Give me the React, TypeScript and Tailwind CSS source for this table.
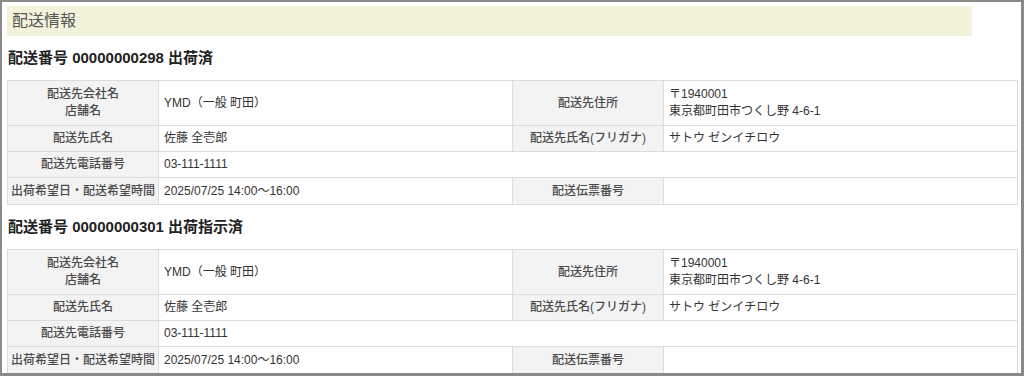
import React from "react";

const font = { fontFamily: '"Liberation Sans", "Noto Sans CJK JP", sans-serif' };

function Th({ children }: { children: React.ReactNode }) {
  return (
    <th className="w-[151px] whitespace-nowrap border border-[#dcdcdc] bg-[#f3f3f3] px-0 py-[4px] text-center align-middle text-[12px] font-medium leading-[17px] text-[#4a4a4a]">
      {children}
    </th>
  );
}

function Td({ children, colSpan }: { children?: React.ReactNode; colSpan?: number }) {
  return (
    <td
      colSpan={colSpan}
      className="border border-[#dcdcdc] bg-white px-[5px] py-[4px] text-left align-middle text-[12px] leading-[17px] text-[#333]"
    >
      {children}
    </td>
  );
}

function Shipment({ no, status }: { no: string; status: string }) {
  return (
    <div>
      <div className="flex h-[44px] items-center pl-[6px] text-[15px] font-bold text-[#222]">
        配送番号 {no} {status}
      </div>
      <table className="ml-[5px] w-[1010px] table-fixed border-collapse">
        <colgroup>
          <col className="w-[151px]" />
          <col className="w-[354px]" />
          <col className="w-[151px]" />
          <col className="w-[354px]" />
        </colgroup>
        <tbody>
          <tr className="h-[45px]">
            <Th>
              配送先会社名
              <br />
              店舗名
            </Th>
            <Td>YMD（一般 町田）</Td>
            <Th>配送先住所</Th>
            <Td>
              〒1940001
              <br />
              東京都町田市つくし野 4-6-1
            </Td>
          </tr>
          <tr>
            <Th>配送先氏名</Th>
            <Td>佐藤 全壱郎</Td>
            <Th>配送先氏名(フリガナ)</Th>
            <Td>サトウ ゼンイチロウ</Td>
          </tr>
          <tr>
            <Th>配送先電話番号</Th>
            <Td colSpan={3}>03-111-1111</Td>
          </tr>
          <tr className="h-[27px]">
            <Th>出荷希望日・配送希望時間</Th>
            <Td>2025/07/25 14:00〜16:00</Td>
            <Th>配送伝票番号</Th>
            <Td></Td>
          </tr>
        </tbody>
      </table>
    </div>
  );
}

export default function App() {
  return (
    <div
      style={font}
      className="h-[376px] w-[1024px] overflow-hidden border-t-[2px] border-l-[2px] border-r-[3px] border-b-[3px] border-[#8a8a8a] bg-white"
    >
      <div className="ml-[5px] mt-[4px] flex h-[30px] w-[965px] items-center bg-[#f3f3dc] pl-[5px] text-[16px] text-[#555]">
        配送情報
      </div>
      <Shipment no="00000000298" status="出荷済" />
      <Shipment no="00000000301" status="出荷指示済" />
    </div>
  );
}
